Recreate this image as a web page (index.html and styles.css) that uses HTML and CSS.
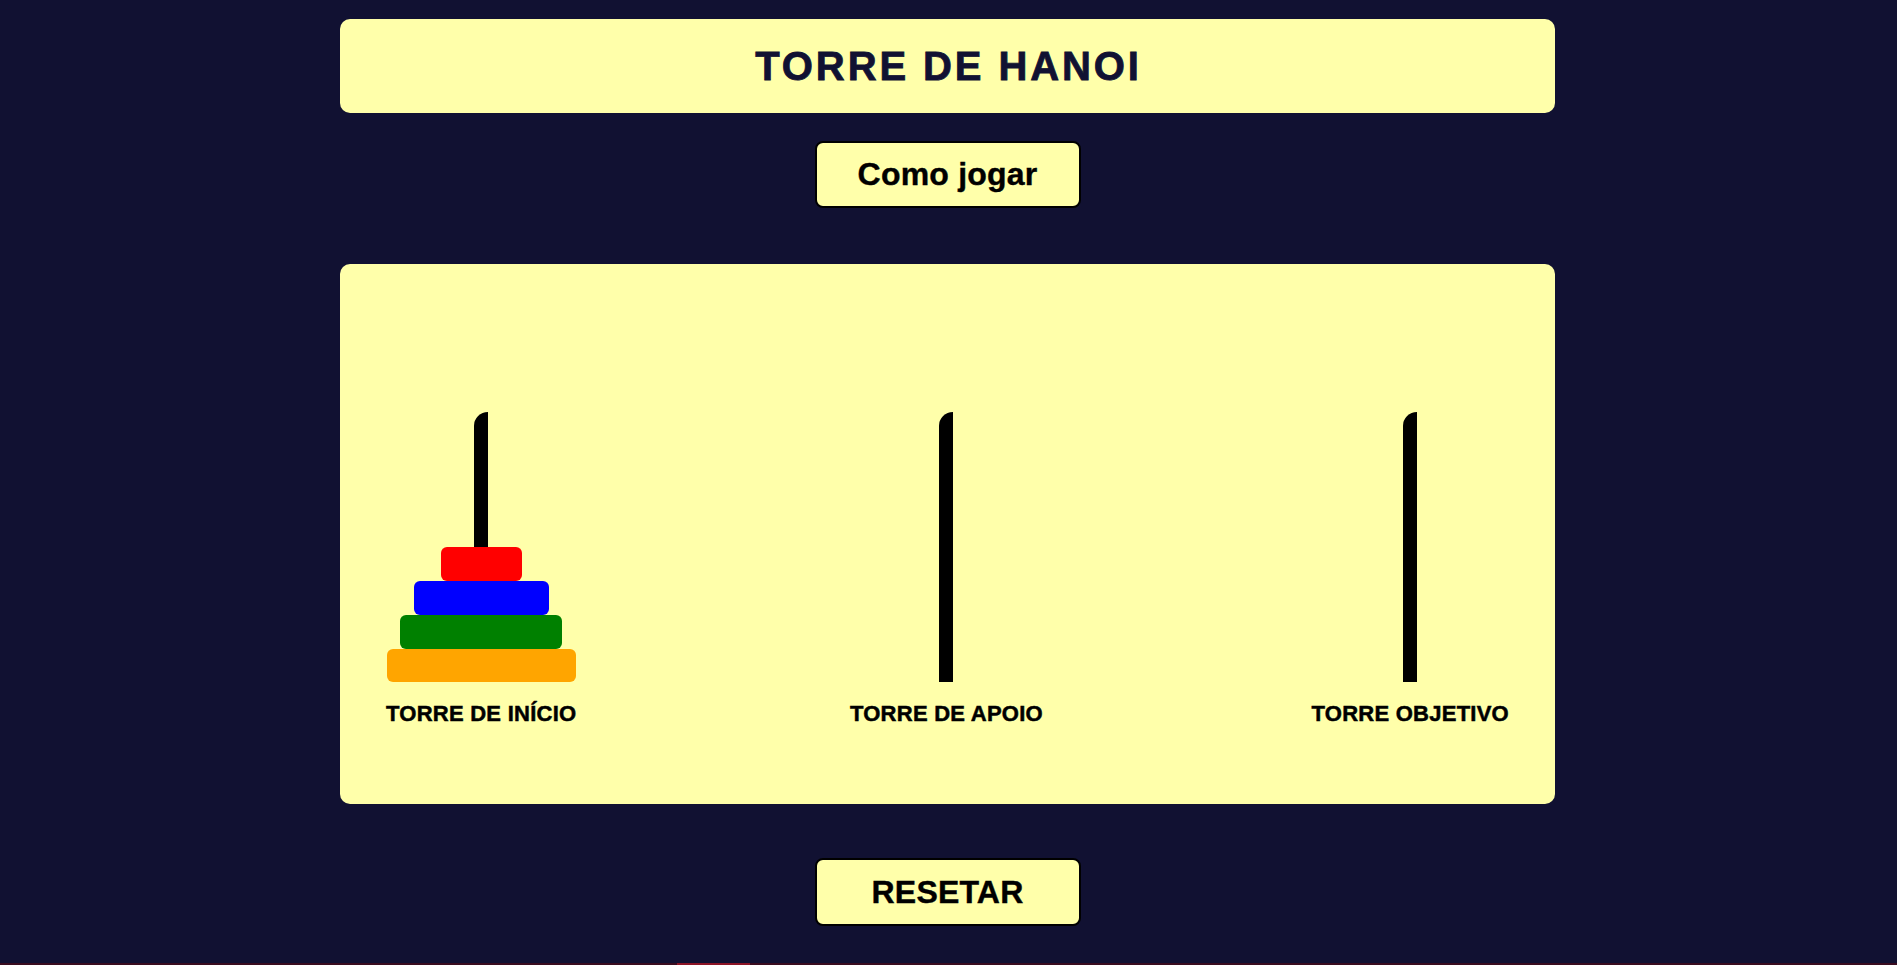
FILE: index.html
```html
<!DOCTYPE html>
<html lang="pt-BR">
<head>
<meta charset="utf-8">
<title>Torre de Hanoi</title>
<link rel="stylesheet" href="styles.css">
</head>
<body>
<div class="page">
  <header class="header">
    <h1 class="title">TORRE DE HANOI</h1>
  </header>
  <button class="btn btn-help">Como jogar</button>
  <main class="board">
    <div class="tower">
      <div class="stack">
        <div class="rod"></div>
        <div class="disks">
          <div class="disk disk-red"></div>
          <div class="disk disk-blue"></div>
          <div class="disk disk-green"></div>
          <div class="disk disk-orange"></div>
        </div>
      </div>
      <span class="label">TORRE DE INÍCIO</span>
    </div>
    <div class="tower tower-middle">
      <div class="stack">
        <div class="rod"></div>
        <div class="disks"></div>
      </div>
      <span class="label">TORRE DE APOIO</span>
    </div>
    <div class="tower">
      <div class="stack">
        <div class="rod"></div>
        <div class="disks"></div>
      </div>
      <span class="label">TORRE OBJETIVO</span>
    </div>
  </main>
  <button class="btn btn-reset">RESETAR</button>
</div>
<div class="strip"><div class="strip-mark"></div></div>
</body>
</html>
```
FILE: styles.css
```css
* { box-sizing: border-box; }

html, body {
  margin: 0;
  padding: 0;
}

body {
  background: #111132;
  font-family: "Liberation Sans", Arial, sans-serif;
  overflow: hidden;
}

.page {
  width: 1215px;
  margin: 0 auto;
  padding-top: 19px;
  display: flex;
  flex-direction: column;
  align-items: center;
  position: relative;
  left: -1px;
}

.header {
  width: 100%;
  height: 94px;
  background: #ffffaa;
  border-radius: 10px;
  display: flex;
  align-items: center;
  justify-content: center;
}

.title {
  margin: 0;
  padding-left: 2px;
  font-size: 40px;
  font-weight: bold;
  letter-spacing: 2.9px;
  color: #111132;
  line-height: 46px;
  -webkit-text-stroke: 0.8px #111132;
}

.btn {
  width: 266px;
  height: 67px;
  background: #ffffaa;
  border: 2px solid #000;
  border-radius: 8px;
  font-family: "Liberation Sans", Arial, sans-serif;
  font-weight: bold;
  font-size: 32px;
  letter-spacing: 0.2px;
  color: #000;
  padding: 0;
  display: flex;
  align-items: center;
  justify-content: center;
  -webkit-text-stroke: 0.4px #000;
}

.btn-help {
  margin-top: 28px;
}

.btn-reset {
  margin-top: 54px;
  height: 68px;
}

.board {
  width: 100%;
  height: 540px;
  margin-top: 56px;
  background: #ffffaa;
  border-radius: 10px;
  padding: 148px 46px 0 46px;
  display: flex;
  justify-content: space-between;
  align-items: flex-start;
}

.tower {
  display: flex;
  flex-direction: column;
  align-items: center;
}

.tower-middle {
  margin-left: 5px;
}

.stack {
  display: grid;
  justify-items: center;
  align-items: end;
}

.rod, .disks {
  grid-area: 1 / 1;
}

.rod {
  width: 14px;
  height: 270px;
  background: #000;
  border-top-left-radius: 14px;
}

.disks {
  display: flex;
  flex-direction: column;
  align-items: center;
}

.disk {
  height: 34px;
  border-radius: 6px;
}

.disk-orange { height: 33px; }

.disk-red { width: 81px; background: #ff0000; }
.disk-blue { width: 135px; background: #0000ff; }
.disk-green { width: 162px; background: #008000; }
.disk-orange { width: 189px; background: #ffa500; }

.label {
  margin-top: 19px;
  font-size: 22px;
  font-weight: bold;
  letter-spacing: 0.25px;
  color: #000;
  line-height: 25px;
  white-space: nowrap;
  -webkit-text-stroke: 0.5px #000;
}

.strip {
  margin-top: 37px;
  height: 2px;
  background: #3a0c1f;
  display: flex;
}

.strip-mark {
  margin-left: 677px;
  width: 73px;
  background: #8c1426;
}
```
